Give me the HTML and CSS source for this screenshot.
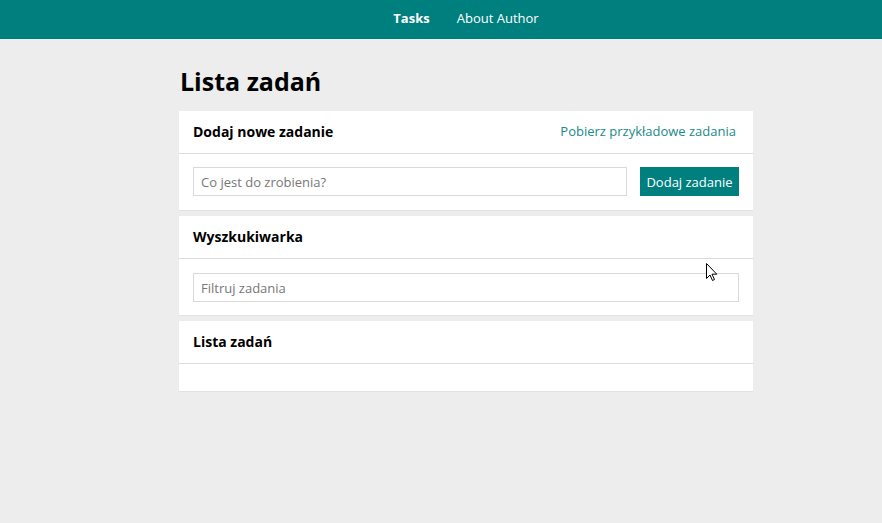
FILE: index.html
```html
<!DOCTYPE html>
<html lang="pl">
<head>
<meta charset="utf-8">
<title>Lista zadań</title>
<link rel="stylesheet" href="styles.css">
</head>
<body>
<nav class="topnav">
  <a class="nav-link nav-link--active" href="#">Tasks</a>
  <a class="nav-link" href="#">About Author</a>
</nav>
<div class="content">
  <main class="container">
    <h1 class="page-title">Lista zadań</h1>
    <section class="card">
      <div class="card-header">
        <h2 class="card-title">Dodaj nowe zadanie</h2>
        <a class="card-link" href="#">Pobierz przykładowe zadania</a>
      </div>
      <div class="card-body card-body--row">
        <input class="text-input" type="text" placeholder="Co jest do zrobienia?">
        <button class="btn" type="button">Dodaj zadanie</button>
      </div>
    </section>
    <section class="card">
      <div class="card-header">
        <h2 class="card-title">Wyszkukiwarka</h2>
      </div>
      <div class="card-body card-body--search">
        <input class="text-input" type="text" placeholder="Filtruj zadania">
      </div>
    </section>
    <section class="card">
      <div class="card-header">
        <h2 class="card-title">Lista zadań</h2>
      </div>
      <div class="card-body card-body--empty"></div>
    </section>
  </main>
</div>
<svg class="cursor" width="12" height="19" viewBox="0 0 12 19"><path d="M0.5 0.5 L0.5 15.5 L4 12 L6.5 17.5 L8.5 16.5 L6 11.2 L10.8 11.2 Z" fill="#fff" stroke="#000" stroke-width="1"/></svg>
</body>
</html>
```
FILE: styles.css
```css
* { box-sizing: border-box; }
html, body { margin: 0; padding: 0; }
body {
  background: #ecedec;
  font-family: "Open Sans", "DejaVu Sans", sans-serif;
  color: #000;
  min-height: 523px;
  position: relative;
}
.topnav {
  height: 39px;
  background: #007f7f;
  display: flex;
  justify-content: center;
  align-items: center;
  gap: 27px;
  padding: 0 0 3px 50px;
}
.nav-link {
  color: #fff;
  text-decoration: none;
  font-size: 13px;
}
.nav-link--active { font-weight: 700; }
.content {
  padding-left: 50px;
}
.container {
  width: 574px;
  margin: 0 auto;
  padding-top: 24px;
}
.page-title {
  margin: 0 0 12px 1px;
  font-size: 25px;
  line-height: 36px;
  font-weight: 700;
}
.card {
  background: #fff;
  margin-bottom: 6px;
  box-shadow: 0 1px 1px rgba(0,0,0,0.04);
}
.card-header {
  height: 43px;
  border-bottom: 1px solid #dcdcdc;
  padding: 0 17px 2px 14px;
  display: flex;
  align-items: center;
  justify-content: space-between;
}
.card-title {
  margin: 0;
  font-size: 14px;
  font-weight: 700;
}
.card-link {
  color: #1b8a8a;
  text-decoration: none;
  font-size: 13px;
}
.card-body {
  padding: 13px 14px 14px;
}
.card-body--search {
  padding: 14px 14px 13px;
}
.card-body--row {
  display: flex;
  gap: 13px;
}
.card-body--empty { height: 27px; padding: 0; }
.text-input {
  flex: 1;
  width: 100%;
  height: 29px;
  border: 1px solid #d9d9d9;
  padding: 0 7px;
  font-family: inherit;
  font-size: 13px;
  color: #333;
  outline: none;
}
.text-input::placeholder { color: #777; }
.btn {
  background: #007f7f;
  color: #fff;
  border: 0;
  height: 29px;
  width: 99px;
  font-family: inherit;
  font-size: 13px;
  padding: 0;
}
.cursor {
  position: absolute;
  left: 706px;
  top: 263px;
}
```
